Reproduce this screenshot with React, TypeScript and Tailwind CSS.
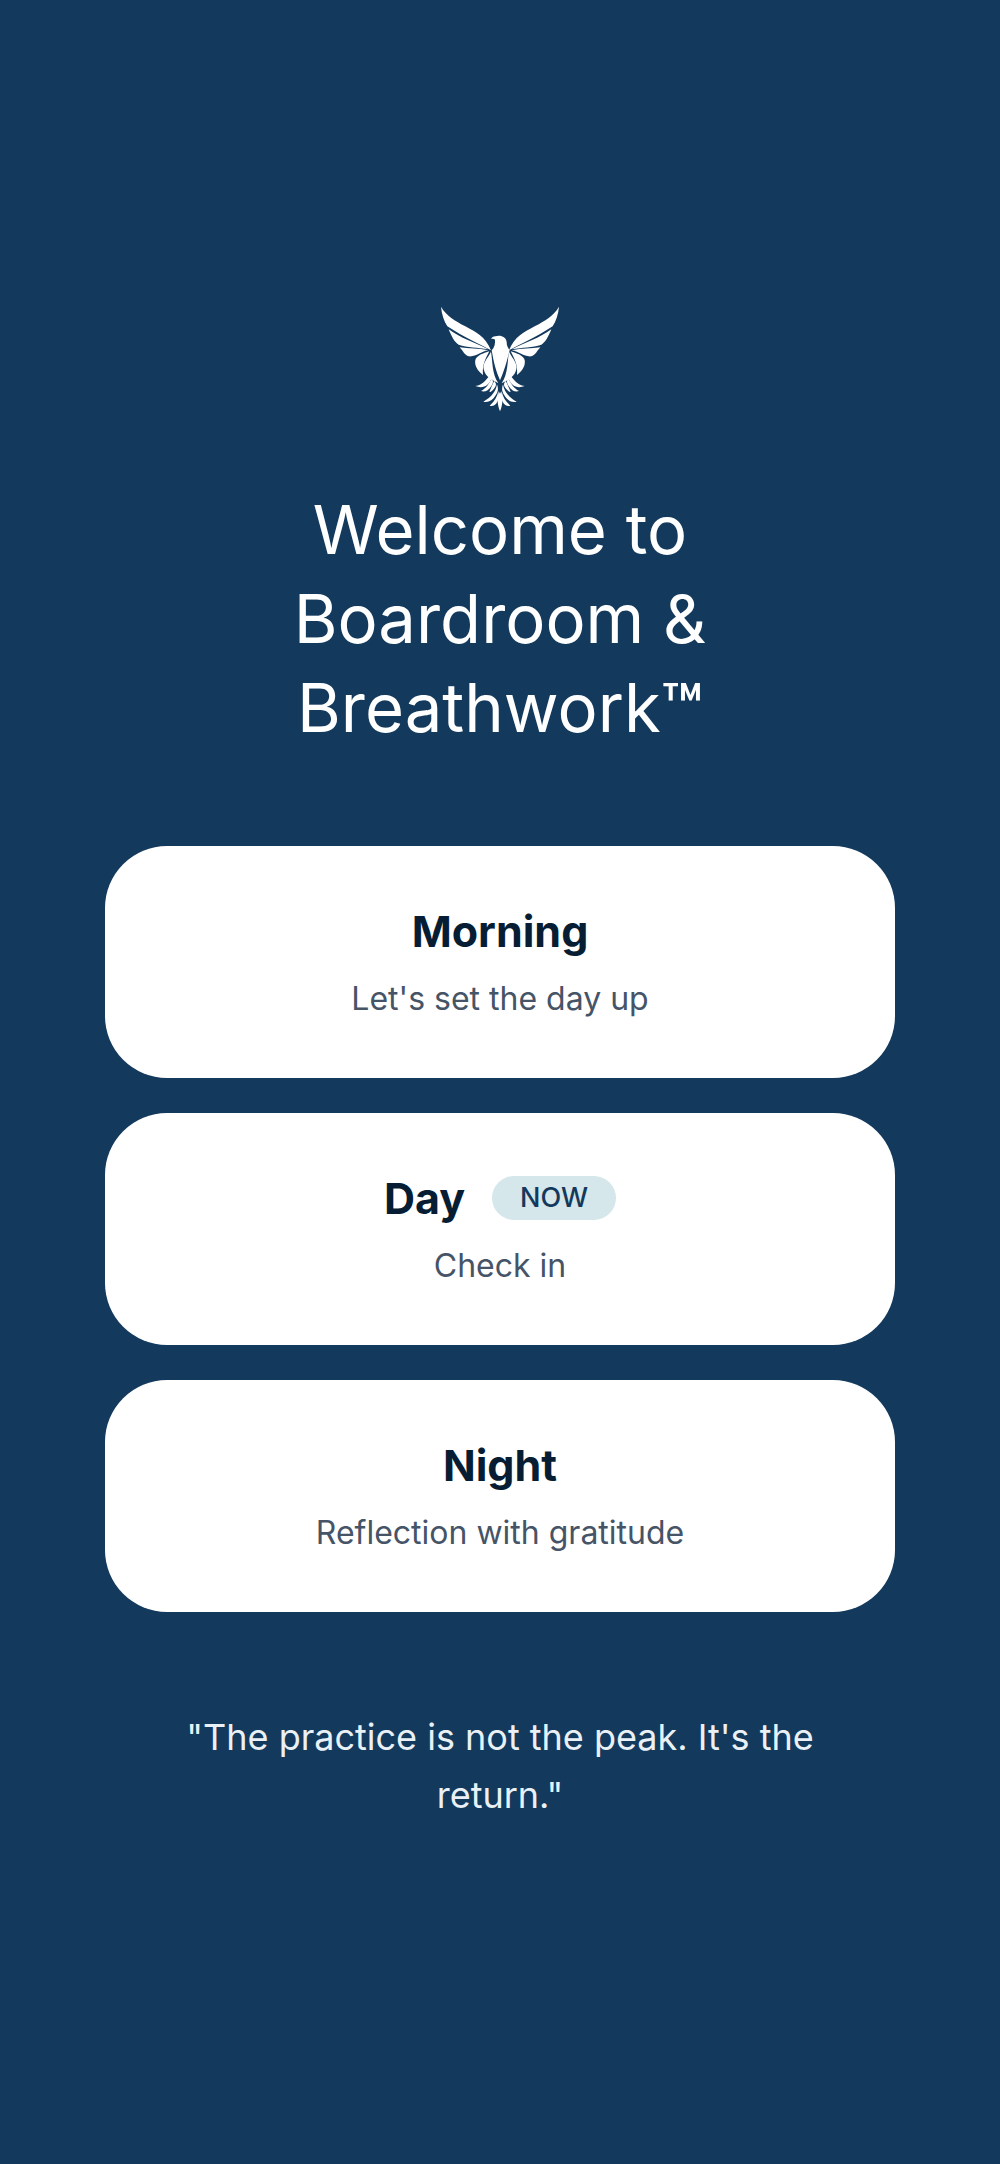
const sessions = [
    { title: 'Morning', text: "Let's set the day up", now: false },
    { title: 'Day', text: 'Check in', now: true },
    { title: 'Night', text: 'Reflection with gratitude', now: false },
];

function Feathers() {
    return (
        <>
            {/* Wing */}
            <path d="M33 33C48 60 76 76 106 92C138 110 166 122 183 164C150 146 104 126 52 92C42 76 35 56 33 33Z" />
            <path d="M56 101C90 127 136 141 174 161C144 155 112 156 86 147C73 140 64 120 56 101Z" />
            <path d="M89 155C116 159 145 157 175 164C151 168 139 184 116 182C105 180 99 166 89 155Z" />
            <path d="M178 167C167 189 156 207 159 238C142 225 133 209 136 193C140 179 160 173 178 167Z" />
            {/* Flank */}
            <path d="M183 168C188 195 185 232 205 263C190 254 166 245 161 221C157 201 174 187 183 168Z" />
            {/* Tail */}
            <path d="M178 240C184 245 185 250 181 256C171 275 153 278 136 271C160 267 167 253 178 240Z" />
            <path d="M185 249C191 254 190 262 184 271C175 286 163 290 153 286C169 277 177 264 185 249Z" />
            <path d="M192 256C200 263 200 269 192 279C185 287 181 289 178 289C184 274 188 266 192 256Z" />
            <path d="M201 266C206 281 204 288 197 299C187 315 176 321 160 318C185 304 198 287 201 266Z" />
            <path d="M205 286C209 300 206 310 202 318C196 329 188 333 179 330C194 317 202 303 205 286Z" />
        </>
    );
}

function Eagle() {
    return (
        <svg viewBox="30 30 360 320" className="w-30 h-27 fill-white" role="img" aria-label="Eagle">
            <Feathers />
            <g transform="translate(420 0) scale(-1 1)">
                <Feathers />
            </g>
            {/* Head and breast */}
            <path d="M183 131C185 125 190 122 196 122C212 117 229 124 230 140C230 151 234 157 239 163C230 200 222 227 210 254C198 227 191 200 185 164C193 156 196 145 195 132C191 129 187 129 183 131Z" />
            <path d="M210 288C219 304 220 322 210 347C200 322 201 304 210 288Z" />
        </svg>
    );
}

export default function App() {
    return (
        <main className="min-h-screen bg-[#13395c] text-white font-['Inter',sans-serif] flex flex-col items-center px-[105px] pt-[305px] pb-16 text-center">
            <Eagle />

            <h1 className="mt-[72px] text-[67px] leading-[89px] font-normal">
                <span className="block">Welcome to</span>
                <span className="block">Boardroom &amp;</span>
                <span className="flex justify-center">
                    <span>Breathwork</span>
                    <span className="font-semibold">™</span>
                </span>
            </h1>

            <div className="mt-[94px] w-full flex flex-col gap-[35px]">
                {sessions.map((session) => (
                    <button
                        key={session.title}
                        type="button"
                        className="w-full bg-white rounded-[62px] pt-[55px] pb-[53px] flex flex-col items-center gap-3"
                    >
                        <span className="flex items-center gap-[27px] text-[43px] leading-[60px] font-bold text-[#071d33]">
                            {session.title}
                            {session.now && (
                                <span className="rounded-full bg-[#d5e7eb] px-7 text-[27px] leading-[44px] font-medium text-[#13395c]">
                                    NOW
                                </span>
                            )}
                        </span>
                        <span className="text-[32px] leading-[52px] text-[#465467]">{session.text}</span>
                    </button>
                ))}
            </div>

            <p className="mt-[96px] max-w-[680px] text-[36px] leading-[58px] text-[#eaf1f6]">
                "The practice is not the peak. It's the return."
            </p>
        </main>
    );
}
